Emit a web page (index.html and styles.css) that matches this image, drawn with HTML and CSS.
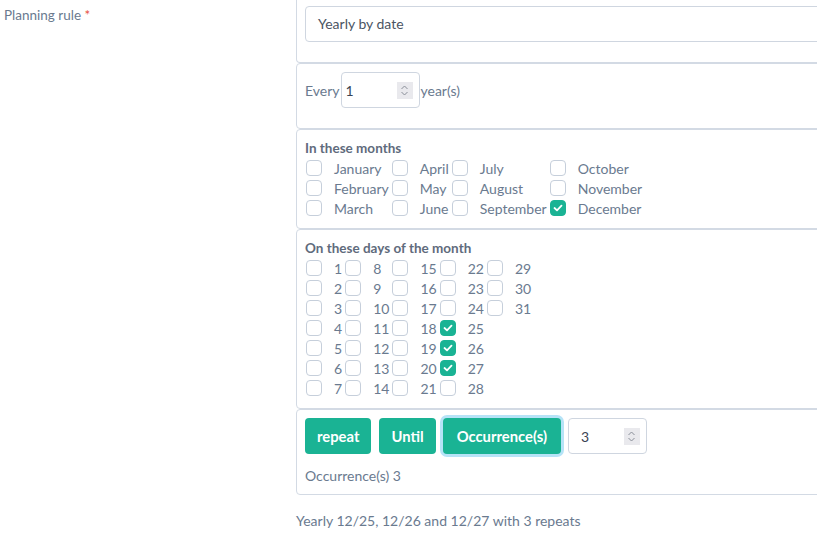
FILE: index.html
```html
<!DOCTYPE html>
<html>
<head>
<meta charset="utf-8">
<link rel="stylesheet" href="styles.css">
</head>
<body>
<div class="row">
  <div class="label-col"><span class="lbl">Planning rule <span class="req">*</span></span></div>
  <div class="field-col">
    <div class="card card-first">
      <div class="select">Yearly by date</div>
    </div>
    <div class="card card-every">
      <div class="every">
        <span>Every</span>
        <div class="num num-small"><span>1</span><span class="spin"><svg width="9" height="13" viewBox="0 0 9 13"><path d="M1.5 5 L4.5 2 L7.5 5 M1.5 8 L4.5 11 L7.5 8" fill="none" stroke="#8a8f99" stroke-width="1"/></svg></span></div>
        <span>year(s)</span>
      </div>
    </div>
    <div class="card card-list">
      <div class="head">In these months</div>
      <div class="grid grid-months">
        <label class="item"><span class="cb"></span><span>January</span></label>
        <label class="item"><span class="cb"></span><span>February</span></label>
        <label class="item"><span class="cb"></span><span>March</span></label>
        <label class="item"><span class="cb"></span><span>April</span></label>
        <label class="item"><span class="cb"></span><span>May</span></label>
        <label class="item"><span class="cb"></span><span>June</span></label>
        <label class="item"><span class="cb"></span><span>July</span></label>
        <label class="item"><span class="cb"></span><span>August</span></label>
        <label class="item"><span class="cb"></span><span>September</span></label>
        <label class="item"><span class="cb"></span><span>October</span></label>
        <label class="item"><span class="cb"></span><span>November</span></label>
        <label class="item"><span class="cb on"><svg width="10" height="8" viewBox="0 0 10 8"><path d="M1.5 4 L4 6.3 L8.5 1.7" fill="none" stroke="#fff" stroke-width="1.8" stroke-linecap="round" stroke-linejoin="round"/></svg></span><span>December</span></label>
      </div>
    </div>
    <div class="card card-list">
      <div class="head">On these days of the month</div>
      <div class="grid grid-days">
        <label class="item"><span class="cb"></span><span>1</span></label>
        <label class="item"><span class="cb"></span><span>2</span></label>
        <label class="item"><span class="cb"></span><span>3</span></label>
        <label class="item"><span class="cb"></span><span>4</span></label>
        <label class="item"><span class="cb"></span><span>5</span></label>
        <label class="item"><span class="cb"></span><span>6</span></label>
        <label class="item"><span class="cb"></span><span>7</span></label>
        <label class="item"><span class="cb"></span><span>8</span></label>
        <label class="item"><span class="cb"></span><span>9</span></label>
        <label class="item"><span class="cb"></span><span>10</span></label>
        <label class="item"><span class="cb"></span><span>11</span></label>
        <label class="item"><span class="cb"></span><span>12</span></label>
        <label class="item"><span class="cb"></span><span>13</span></label>
        <label class="item"><span class="cb"></span><span>14</span></label>
        <label class="item"><span class="cb"></span><span>15</span></label>
        <label class="item"><span class="cb"></span><span>16</span></label>
        <label class="item"><span class="cb"></span><span>17</span></label>
        <label class="item"><span class="cb"></span><span>18</span></label>
        <label class="item"><span class="cb"></span><span>19</span></label>
        <label class="item"><span class="cb"></span><span>20</span></label>
        <label class="item"><span class="cb"></span><span>21</span></label>
        <label class="item"><span class="cb"></span><span>22</span></label>
        <label class="item"><span class="cb"></span><span>23</span></label>
        <label class="item"><span class="cb"></span><span>24</span></label>
        <label class="item"><span class="cb on"><svg width="10" height="8" viewBox="0 0 10 8"><path d="M1.5 4 L4 6.3 L8.5 1.7" fill="none" stroke="#fff" stroke-width="1.8" stroke-linecap="round" stroke-linejoin="round"/></svg></span><span>25</span></label>
        <label class="item"><span class="cb on"><svg width="10" height="8" viewBox="0 0 10 8"><path d="M1.5 4 L4 6.3 L8.5 1.7" fill="none" stroke="#fff" stroke-width="1.8" stroke-linecap="round" stroke-linejoin="round"/></svg></span><span>26</span></label>
        <label class="item"><span class="cb on"><svg width="10" height="8" viewBox="0 0 10 8"><path d="M1.5 4 L4 6.3 L8.5 1.7" fill="none" stroke="#fff" stroke-width="1.8" stroke-linecap="round" stroke-linejoin="round"/></svg></span><span>27</span></label>
        <label class="item"><span class="cb"></span><span>28</span></label>
        <label class="item"><span class="cb"></span><span>29</span></label>
        <label class="item"><span class="cb"></span><span>30</span></label>
        <label class="item"><span class="cb"></span><span>31</span></label>
      </div>
    </div>
    <div class="card card-end">
      <div class="btns">
        <button class="btn">repeat</button>
        <button class="btn">Until</button>
        <button class="btn btn-focus">Occurrence(s)</button>
        <div class="num num-occ"><span>3</span><span class="spin"><svg width="9" height="13" viewBox="0 0 9 13"><path d="M1.5 5 L4.5 2 L7.5 5 M1.5 8 L4.5 11 L7.5 8" fill="none" stroke="#8a8f99" stroke-width="1"/></svg></span></div>
      </div>
      <div class="occ-text">Occurrence(s) 3</div>
    </div>
    <div class="summary">Yearly 12/25, 12/26 and 12/27 with 3 repeats</div>
  </div>
</div>
</body>
</html>
```

FILE: styles.css
```css
html, body {
  margin: 0;
  padding: 0;
  overflow: hidden;
  background: #fff;
}
body {
  font-family: "Lato", "Open Sans", sans-serif;
  font-size: 14px;
  color: #6a7a8f;
  width: 817px;
  height: 546px;
}
.row {
  display: flex;
  width: 1100px;
}
.label-col {
  width: 296px;
  flex: none;
  padding: 5px 0 0 4px;
  box-sizing: border-box;
}
.lbl {
  font-size: 13.5px;
  line-height: 20px;
}
.req { color: #e74c3c; }
.field-col {
  width: 600px;
  flex: none;
}
.card {
  border: 1px solid #d3dae4;
  border-radius: 4px;
  padding: 8px 8px 20px 8px;
}
.card-first {
  border-top: 0;
  border-top-left-radius: 0;
  border-top-right-radius: 0;
  padding-top: 6px;
}
.select {
  height: 34px;
  border: 1px solid #cfd6e0;
  border-radius: 4px;
  padding: 0 12px;
  line-height: 34px;
  color: #4b5563;
  font-size: 14px;
}
.every {
  display: flex;
  align-items: center;
  gap: 1px;
}
.num {
  height: 34px;
  border: 1px solid #cfd6e0;
  border-radius: 4px;
  display: flex;
  align-items: center;
  justify-content: space-between;
  padding: 0 6px 0 4px;
  color: #3b4454;
  box-sizing: content-box;
}
.num-small { width: 67px; }
.num-occ { width: 59px; padding-left: 12px; margin-left: -1px; }
.spin {
  width: 16px;
  height: 17px;
  background: #e9e9ed;
  display: flex;
  align-items: center;
  justify-content: center;
}
.card-list {
  padding: 8px 8px 10px 8px;
}
.head {
  font-weight: bold;
  font-size: 13.5px;
  line-height: 20px;
  color: #5f6b7c;
}
.grid {
  display: grid;
  grid-auto-flow: column;
  grid-auto-columns: max-content;
  column-gap: 3px;
  justify-content: start;
  margin-left: 1px;
}
.grid-months { grid-template-rows: repeat(3, 20px); }
.grid-days { grid-template-rows: repeat(7, 20px); }
.item {
  display: flex;
  align-items: center;
  height: 20px;
}
.cb {
  width: 14px;
  height: 14px;
  border: 1px solid #c6cfdb;
  border-radius: 4px;
  margin-right: 12px;
  display: flex;
  align-items: center;
  justify-content: center;
  flex: none;
}
.cb.on {
  background: #1ab394;
  border-color: #1ab394;
}
.card-end {
  padding: 8px 8px 8px 8px;
}
.btns {
  display: flex;
  align-items: center;
  gap: 8px;
}
.btn {
  font-family: inherit;
  height: 36px;
  border: 0;
  border-radius: 4px;
  background: #1ab394;
  color: #fff;
  font-weight: bold;
  font-size: 14.8px;
  padding: 0 12px;
}
.btn-focus {
  box-shadow: 0 0 0 3px #b6e3f7;
  margin-left: -1px;
  padding: 0 14px;
}
.occ-text {
  margin-top: 12px;
  line-height: 20px;
}
.summary {
  margin-top: 16px;
  line-height: 20px;
}
```
